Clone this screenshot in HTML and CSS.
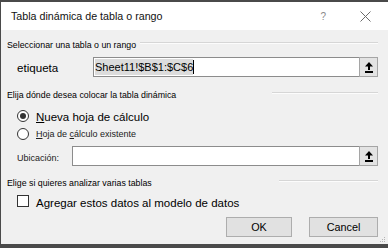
FILE: index.html
```html
<!DOCTYPE html>
<html lang="es">

<head>
  <meta charset="UTF-8">
  <title>Tabla dinámica de tabla o rango</title>
  <link rel="stylesheet" href="styles.css">
</head>

<body>

  <div class="dialog">
    <div class="titlebar">
      <span class="title">Tabla dinámica de tabla o rango</span>
      <span class="help">?</span>
      <svg class="close" width="11" height="11" viewBox="0 0 11 11">
        <path d="M0.5 0.5 L10.5 10.5 M10.5 0.5 L0.5 10.5" stroke="#6b6b6b" stroke-width="1" fill="none" />
      </svg>
    </div>

    <div class="content">
      <div class="group-head head-1">
        <span>Seleccionar una tabla o un rango</span>
        <i class="rule rule-1"></i>
      </div>

      <div class="field-row row-table">
        <label class="field-label label-table">etiqueta</label>
        <div class="refedit">
          <div class="ref-text"><span class="sel">Sheet11!$B$1:$C$6</span><span class="caret"></span></div>
          <span class="ref-btn">
            <svg width="8" height="11" viewBox="0 0 8 11">
              <polygon points="4,0 0,4.5 8,4.5" fill="#000" />
              <rect x="3" y="4" width="2" height="4" fill="#000" />
              <rect x="0" y="9" width="8" height="2" fill="#000" />
            </svg>
          </span>
        </div>
      </div>

      <div class="group-head head-2">
        <span>Elija dónde desea colocar la tabla dinámica</span>
        <i class="rule rule-2"></i>
      </div>

      <div class="option-row opt-new">
        <span class="radio checked"></span>
        <span class="opt-big"><u>N</u>ueva hoja de cálculo</span>
      </div>
      <div class="option-row opt-existing">
        <span class="radio"></span>
        <span class="opt-small"><u>H</u>oja de <u>c</u>álculo existente</span>
      </div>

      <div class="field-row row-place">
        <label class="field-label label-place">Ubicación:</label>
        <div class="refedit">
          <div class="ref-text"></div>
          <span class="ref-btn">
            <svg width="8" height="11" viewBox="0 0 8 11">
              <polygon points="4,0 0,4.5 8,4.5" fill="#000" />
              <rect x="3" y="4" width="2" height="4" fill="#000" />
              <rect x="0" y="9" width="8" height="2" fill="#000" />
            </svg>
          </span>
        </div>
      </div>

      <div class="group-head head-3">
        <span>Elige si quieres analizar varias tablas</span>
        <i class="rule rule-3"></i>
      </div>

      <div class="option-row opt-model">
        <span class="checkbox"></span>
        <span class="opt-big">Agregar estos datos al modelo de datos</span>
      </div>

      <div class="actions">
        <button class="btn btn-ok">OK</button>
        <button class="btn btn-cancel">Cancel</button>
      </div>
    </div>

    <svg class="grip" width="6" height="6" viewBox="0 0 6 6">
      <rect x="4" y="0" width="1" height="1" fill="#b5b5b5" />
      <rect x="2" y="2" width="1" height="1" fill="#b5b5b5" />
      <rect x="4" y="2" width="1" height="1" fill="#b5b5b5" />
      <rect x="0" y="4" width="1" height="1" fill="#b5b5b5" />
      <rect x="2" y="4" width="1" height="1" fill="#b5b5b5" />
      <rect x="4" y="4" width="1" height="1" fill="#b5b5b5" />
    </svg>
  </div>

</body>

</html>
```

FILE: styles.css
```css
html,
body {
  margin: 0;
  padding: 0;
  background-color: #4a4a4a;
  height: 100%;
  overflow: hidden;
}

body {
  font-family: 'Liberation Sans', Arial, sans-serif;
  color: #000;
}

.dialog {
  position: relative;
  margin: 2px 0 0 1px;
  width: 387px;
  background-color: #f0f0f0;
}

/* title bar */
.titlebar {
  height: 28px;
  background-color: #fff;
  display: flex;
  align-items: center;
  padding-left: 10px;
}

.title {
  font-size: 10.7px;
  color: #111;
}

.help {
  margin-left: auto;
  font-size: 10px;
  color: #8a8a8a;
}

.close {
  margin-left: 34px;
  margin-right: 17px;
}

/* body */
.content {
  padding: 9px 10px 7px 6px;
  height: 214px;
  box-sizing: border-box;
}

.group-head {
  height: 12px;
  display: flex;
  align-items: center;
  font-size: 8.8px;
  white-space: nowrap;
}

.rule {
  display: block;
  height: 0;
  border-top: 1px solid #d6d6d6;
  border-bottom: 1px solid #fcfcfc;
  margin-bottom: 4px;
  margin-left: auto;
}

.rule-1 {
  width: 238px;
}

.rule-2 {
  width: 106px;
}

.rule-3 {
  width: 99px;
}

.head-2 {
  margin-top: 12px;
}

.head-3 {
  margin-top: 11px;
}

/* fields */
.field-row {
  display: flex;
  align-items: center;
  height: 20px;
  padding-left: 10px;
}

.row-table {
  margin-top: 6px;
}

.row-place {
  margin-top: 5px;
}

.field-label {
  flex: none;
}

.label-table {
  width: 76px;
  font-size: 11.6px;
  margin-top: 1px;
}

.label-place {
  width: 55px;
  font-size: 9px;
  color: #222;
  margin-top: 3px;
}

.refedit {
  flex: 1;
  display: flex;
  height: 20px;
}

.ref-text {
  flex: 1;
  background-color: #fff;
  border: 1px solid #8c8c8c;
  border-right: none;
  display: flex;
  align-items: center;
  padding-left: 1px;
}

.sel {
  background-color: #dcdcdc;
  font-size: 11px;
  line-height: 16px;
  color: #000;
}

.caret {
  width: 1px;
  height: 14px;
  background-color: #000;
}

.ref-btn {
  width: 17px;
  height: 18px;
  border: 1px solid #a5a5a5;
  background-color: #e3e3e3;
  display: flex;
  align-items: center;
  justify-content: center;
}

/* options */
.option-row {
  display: flex;
  align-items: center;
  height: 14px;
  padding-left: 10px;
}

.opt-new {
  margin-top: 8px;
}

.opt-existing {
  margin-top: 4px;
}

.opt-model {
  margin-top: 6px;
}

.radio {
  width: 10px;
  height: 10px;
  border: 1px solid #333;
  border-radius: 50%;
  background-color: #fff;
  margin-right: 7px;
  display: flex;
  align-items: center;
  justify-content: center;
}

.radio.checked::after {
  content: '';
  width: 6px;
  height: 6px;
  border-radius: 50%;
  background-color: #333;
}

.checkbox {
  width: 10px;
  height: 10px;
  border: 1px solid #333;
  background-color: #fff;
  margin-right: 7px;
  margin-top: -2px;
}

.opt-big {
  font-size: 11.5px;
  margin-top: 1px;
}

.opt-small {
  font-size: 9px;
  color: #222;
}

/* buttons */
.actions {
  display: flex;
  justify-content: flex-end;
  gap: 17px;
  margin-top: 8px;
}

.btn {
  height: 20px;
  border: 1px solid #adadad;
  background-color: #e1e1e1;
  font-family: 'Liberation Sans', Arial, sans-serif;
  font-size: 10.8px;
  color: #000;
  padding: 0;
}

.btn-ok {
  width: 66px;
}

.btn-cancel {
  width: 69px;
}

.grip {
  position: absolute;
  right: 2px;
  bottom: 1px;
}
```
